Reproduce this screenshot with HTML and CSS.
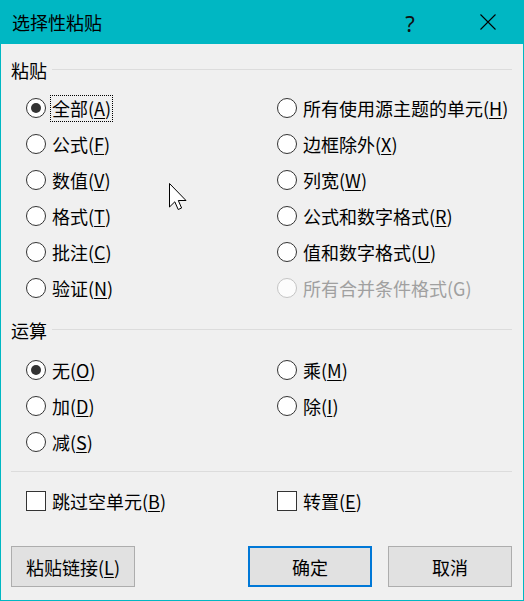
FILE: index.html
```html
<!DOCTYPE html>
<html lang="zh-CN">
<head>
<meta charset="utf-8">
<title>选择性粘贴</title>
<link rel="stylesheet" href="styles.css">
</head>
<body>
<div class="win">
  <div class="titlebar">
    <span class="title">选择性粘贴</span>
    <span class="help">?</span>
    <span class="close"><svg width="16" height="16" viewBox="0 0 16 16"><path d="M0.5 0.5 L15.5 15.5 M15.5 0.5 L0.5 15.5" stroke="#000" stroke-width="1.1" fill="none"/></svg></span>
  </div>
  <div class="content">
    <div class="group-head"><span class="gl">粘贴</span><span class="rule"></span></div>
    <div class="grid paste">
      <div class="opt"><span class="radio on"></span><span class="lbl focus">全部(<u>A</u>)</span></div>
      <div class="opt"><span class="radio"></span><span class="lbl">所有使用源主题的单元(<u>H</u>)</span></div>
      <div class="opt"><span class="radio"></span><span class="lbl">公式(<u>F</u>)</span></div>
      <div class="opt"><span class="radio"></span><span class="lbl">边框除外(<u>X</u>)</span></div>
      <div class="opt"><span class="radio"></span><span class="lbl">数值(<u>V</u>)</span></div>
      <div class="opt"><span class="radio"></span><span class="lbl">列宽(<u>W</u>)</span></div>
      <div class="opt"><span class="radio"></span><span class="lbl">格式(<u>T</u>)</span></div>
      <div class="opt"><span class="radio"></span><span class="lbl">公式和数字格式(<u>R</u>)</span></div>
      <div class="opt"><span class="radio"></span><span class="lbl">批注(<u>C</u>)</span></div>
      <div class="opt"><span class="radio"></span><span class="lbl">值和数字格式(<u>U</u>)</span></div>
      <div class="opt"><span class="radio"></span><span class="lbl">验证(<u>N</u>)</span></div>
      <div class="opt disabled"><span class="radio"></span><span class="lbl">所有合并条件格式(G)</span></div>
    </div>
    <div class="group-head ops-head"><span class="gl">运算</span><span class="rule"></span></div>
    <div class="grid ops">
      <div class="opt"><span class="radio on"></span><span class="lbl">无(<u>O</u>)</span></div>
      <div class="opt"><span class="radio"></span><span class="lbl">乘(<u>M</u>)</span></div>
      <div class="opt"><span class="radio"></span><span class="lbl">加(<u>D</u>)</span></div>
      <div class="opt"><span class="radio"></span><span class="lbl">除(<u>I</u>)</span></div>
      <div class="opt"><span class="radio"></span><span class="lbl">减(<u>S</u>)</span></div>
    </div>
    <div class="sep"></div>
    <div class="grid checks">
      <div class="opt"><span class="check"></span><span class="lbl">跳过空单元(<u>B</u>)</span></div>
      <div class="opt"><span class="check"></span><span class="lbl">转置(<u>E</u>)</span></div>
    </div>
    <div class="buttons">
      <button class="btn">粘贴链接(<u>L</u>)</button>
      <button class="btn primary">确定</button>
      <button class="btn">取消</button>
    </div>
  </div>
  <svg class="cursor" width="20" height="28" viewBox="0 0 20 28"><path d="M0.5 0.5 L0.5 24 L5.8 18.8 L9.2 26.5 L12.6 25 L9.3 17.5 L17 17.5 Z" fill="#fff" stroke="#000" stroke-width="1" stroke-linejoin="miter"/></svg>
</div>
</body>
</html>
```
FILE: styles.css
```css
* { box-sizing: border-box; }
html, body { margin: 0; padding: 0; }
body {
  font-family: "Noto Sans CJK SC", "Noto Sans", sans-serif;
  font-size: 18px;
  color: #000;
  background: #f0f0f0;
}
.win {
  position: relative;
  width: 524px;
  height: 601px;
  background: #f0f0f0;
  border: 1px solid #00b7c3;
  border-top: none;
  overflow: hidden;
}
.titlebar {
  height: 44px;
  margin: 0 -1px;
  background: #00b7c3;
  display: flex;
  align-items: center;
  padding-left: 12px;
}
.title {
  font-size: 18px;
  line-height: 24px;
  flex: 1;
}
.help {
  font-family: "Noto Sans", "DejaVu Sans", sans-serif;
  font-size: 22px;
  line-height: 30px;
  width: 16px;
  text-align: center;
  margin-right: 62px;
  margin-top: 1px;
  color: #111;
}
.close {
  display: flex;
  width: 16px;
  height: 16px;
  margin-right: 28px;
}
.content {
  padding: 16px 11px 0 10px;
}
.group-head {
  display: flex;
  align-items: center;
  height: 20px;
  line-height: 20px;
}
.gl { margin-right: 5px; }
.rule {
  flex: 1;
  height: 1px;
  background: #dcdcdc;
  margin-top: -1px;
}
.grid {
  display: grid;
  grid-template-columns: 251px 1fr;
  grid-auto-rows: 36px;
  margin-left: 15px;
}
.paste { margin-top: 10px; }
.ops-head { margin-top: 14px; }
.ops { margin-top: 12px; }
.sep {
  height: 1px;
  background: #dcdcdc;
  margin-top: 11px;
}
.checks { margin-top: 11px; }
.opt {
  display: flex;
  align-items: center;
  white-space: nowrap;
}
.radio {
  width: 20px;
  height: 20px;
  border-radius: 50%;
  border: 1px solid #333;
  background: #fff;
  display: flex;
  align-items: center;
  justify-content: center;
  flex: none;
}
.radio.on::after {
  content: "";
  width: 10px;
  height: 10px;
  border-radius: 50%;
  background: #333;
}
.check {
  width: 20px;
  height: 20px;
  border: 1px solid #333;
  background: #fff;
  flex: none;
}
.lbl {
  margin-left: 4px;
  padding: 0 1px;
  border: 1px solid transparent;
  line-height: 25px;
}
.lbl.focus { border: 1px dotted #000; }
u { text-underline-offset: 2px; text-decoration-thickness: 1px; }
.disabled .radio { border-color: #c4c4c4; background: #fcfcfc; }
.disabled .lbl { color: #a0a0a0; }
.buttons {
  display: flex;
  margin-top: 27px;
}
.btn {
  font-family: inherit;
  font-size: 18px;
  color: #000;
  width: 124px;
  height: 41px;
  background: #e1e1e1;
  border: 1px solid #adadad;
  padding: 0;
  line-height: 1;
}
.btn.primary {
  margin-left: auto;
  border: 2px solid #0078d7;
}
.btn + .btn.primary + .btn { margin-left: 16px; }
.cursor {
  position: absolute;
  left: 168px;
  top: 183px;
}
```
